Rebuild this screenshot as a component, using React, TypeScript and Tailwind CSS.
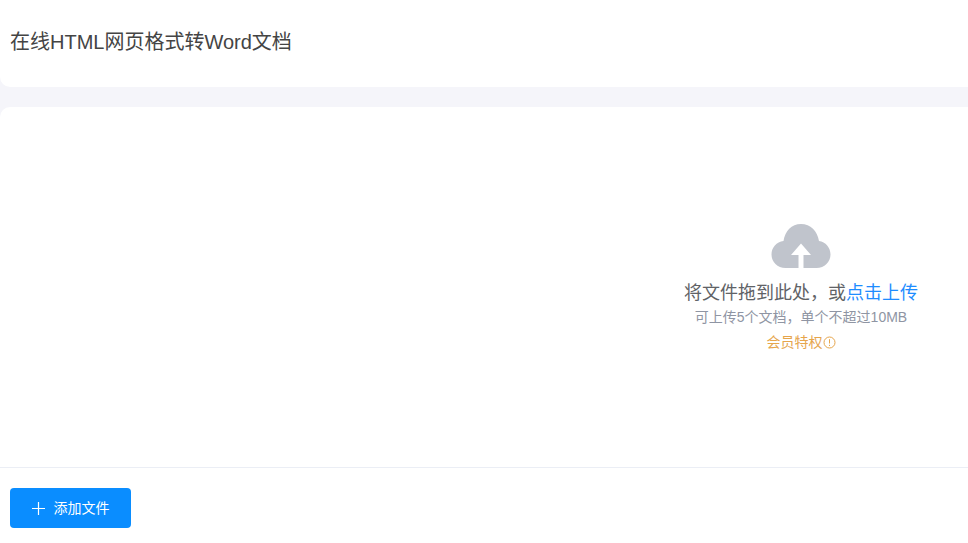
const fontStack = "font-['Liberation_Sans','Noto_Sans_CJK_SC',sans-serif]"

function CloudIcon() {
  return (
    <svg width="60" height="44" viewBox="0 0 60 44" className="block">
      <path
        d="M14.500 44C6.500 44 0.500 38 0.500 30.500C0.500 23.500 5.500 18 12.500 17C14 7 20.500 0 30 0C39.500 0 46.500 7 48 17C54.500 18 59.500 23.500 59.500 30.500C59.500 38 53.500 44 45.500 44H32.500V31H40L30 19.500L20 31H27.500V44Z"
        fill="#c0c4cc"
      />
    </svg>
  )
}

export default function App() {
  return (
    <div className={`${fontStack} h-[543px] w-[968px] overflow-hidden bg-[#f5f5fa] flex flex-col`}>
      <header className="h-[87px] shrink-0 bg-white rounded-bl-[10px] pl-[10px] pt-[29px]">
        <h1 className="text-[20px] leading-[26px] font-normal text-[#444]">在线HTML网页格式转Word文档</h1>
      </header>

      <main className="mt-[20px] flex-1 bg-white rounded-tl-[10px] flex flex-col">
        <div className="h-[360px] shrink-0 flex justify-end">
          <div className="w-[334px] pt-[117px] flex flex-col items-center">
            <CloudIcon />
            <p className="mt-[13px] text-[18px] leading-[24px] text-[#606266] whitespace-nowrap">
              将文件拖到此处，或<span className="text-[#1e8cff]">点击上传</span>
            </p>
            <p className="mt-[3px] text-[14px] leading-[18px] text-[#8f95a3] whitespace-nowrap">
              可上传5个文档，单个不超过10MB
            </p>
            <div className="mt-[7px] flex items-center text-[14px] leading-[18px] text-[#e6a54c]">
              会员特权
              <svg width="13" height="13" viewBox="0 0 13 13" fill="none" stroke="#e6a54c" className="block">
                <circle cx="6.500" cy="6.500" r="5.500" />
                <path d="M6.500 3.200V7.500M6.500 8.800V10" />
              </svg>
            </div>
          </div>
        </div>

        <footer className="flex-1 border-t border-[#ebeef5] pl-[10px] pt-[20px]">
          <button className="w-[121px] h-[40px] rounded-[4px] bg-[#0a8dff] text-white text-[14px] flex items-center justify-center gap-[9px]">
            <svg width="13" height="13" viewBox="0 0 13 13" stroke="currentColor" strokeWidth="1.200" className="block">
              <path d="M6.500 0V13M0 6.500H13" />
            </svg>
            添加文件
          </button>
        </footer>
      </main>
    </div>
  )
}
